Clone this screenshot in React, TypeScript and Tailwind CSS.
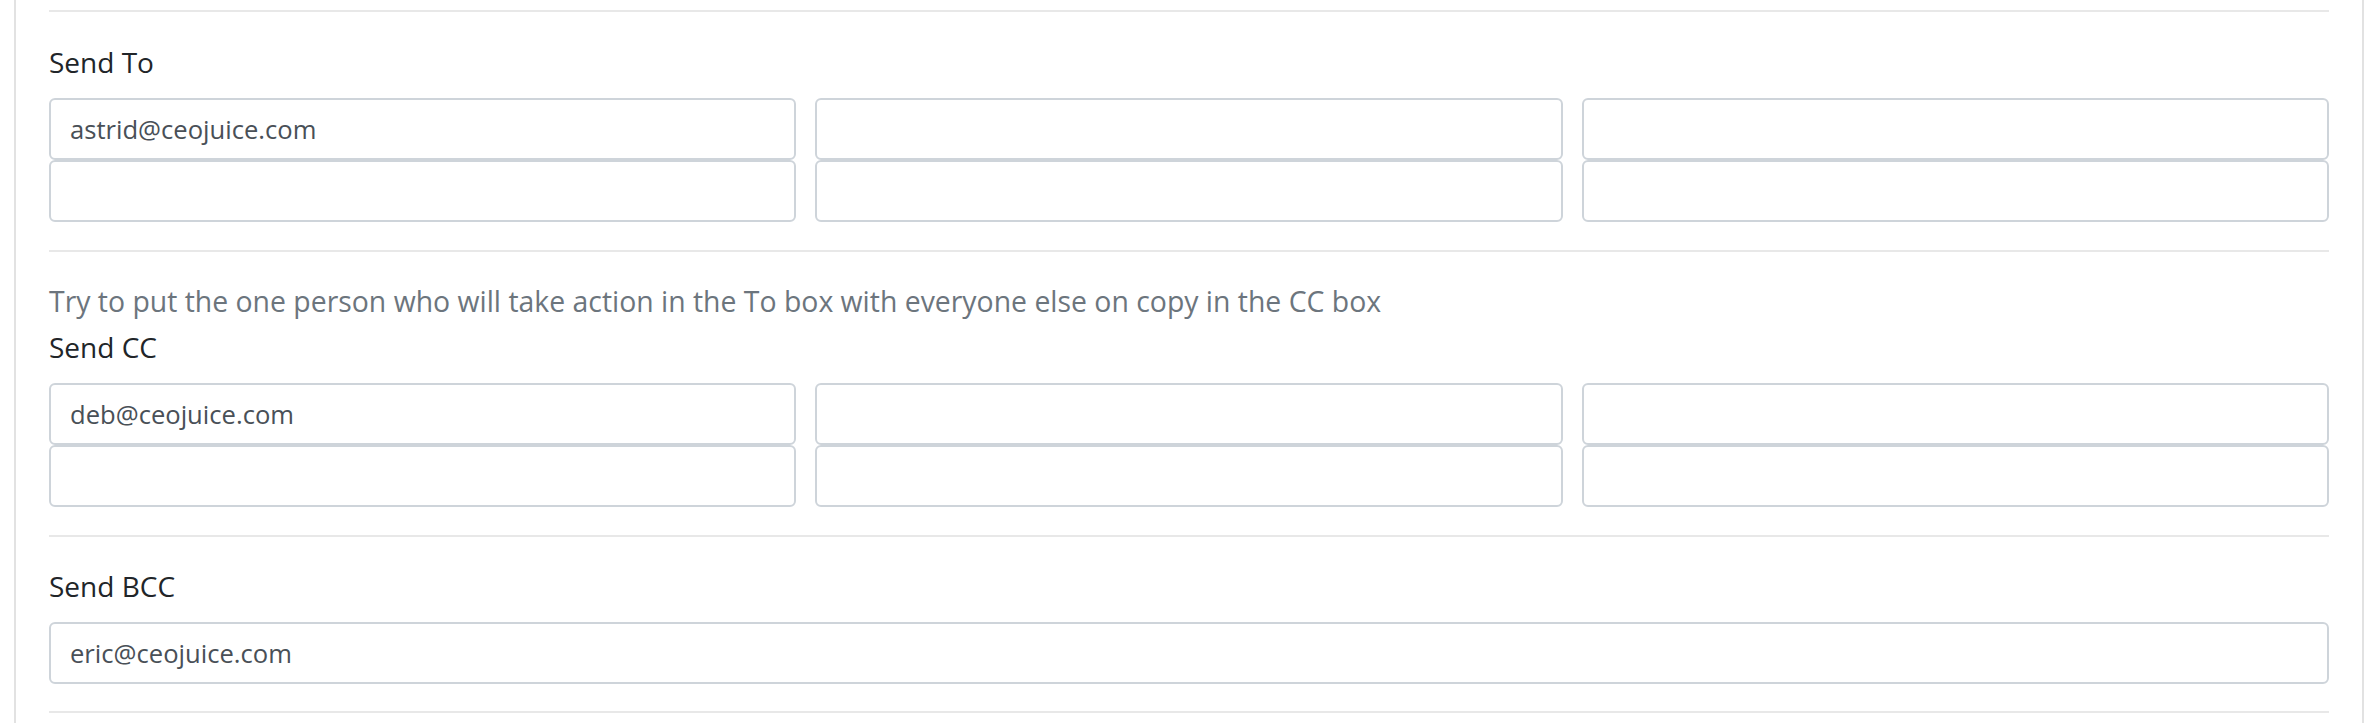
import React from 'react';

const FONT = "font-['Open_Sans','Noto_Sans',sans-serif]";

function Field({ value = '' }: { value?: string }) {
    return (
        <input
            readOnly
            value={value}
            className="block w-full h-[62px] rounded-[6px] border-2 border-[#ced4da] bg-white px-[19px] text-[25.6px] text-[#495057] outline-none"
        />
    );
}

function Rule() {
    return <div className="h-[2px] bg-[#e8e8e8]" />;
}

function Label({ children }: { children: React.ReactNode }) {
    return <div className="text-[28px] leading-[40px] text-[#212529] mb-[16px]">{children}</div>;
}

function EmailGrid({ first }: { first: string }) {
    const values = [first, '', '', '', '', ''];
    return (
        <div className="grid grid-cols-3 gap-x-[19px]">
            {values.map((v, i) => (
                <Field key={i} value={v} />
            ))}
        </div>
    );
}

export default function App() {
    return (
        <div className={`min-h-screen bg-white pl-[14px] pr-[8px] ${FONT}`}>
            <div className="min-h-[723px] border-x-2 border-[#e2e2e2] px-[33px] pt-[10px]">
                <Rule />

                {/* Send To */}
                <section className="pt-[30px] pb-[28px]">
                    <Label>Send To</Label>
                    <EmailGrid first="astrid@ceojuice.com" />
                </section>

                <Rule />

                {/* Send CC */}
                <section className="pt-[30px] pb-[28px]">
                    <p className="text-[28.4px] leading-[38px] text-[#6c757d] mb-[7px]">
                        Try to put the one person who will take action in the To box with everyone else on copy in the CC box
                    </p>
                    <Label>Send CC</Label>
                    <EmailGrid first="deb@ceojuice.com" />
                </section>

                <Rule />

                {/* Send BCC */}
                <section className="pt-[29px] pb-[27px]">
                    <Label>Send BCC</Label>
                    <Field value="eric@ceojuice.com" />
                </section>

                <Rule />
            </div>
        </div>
    );
}
